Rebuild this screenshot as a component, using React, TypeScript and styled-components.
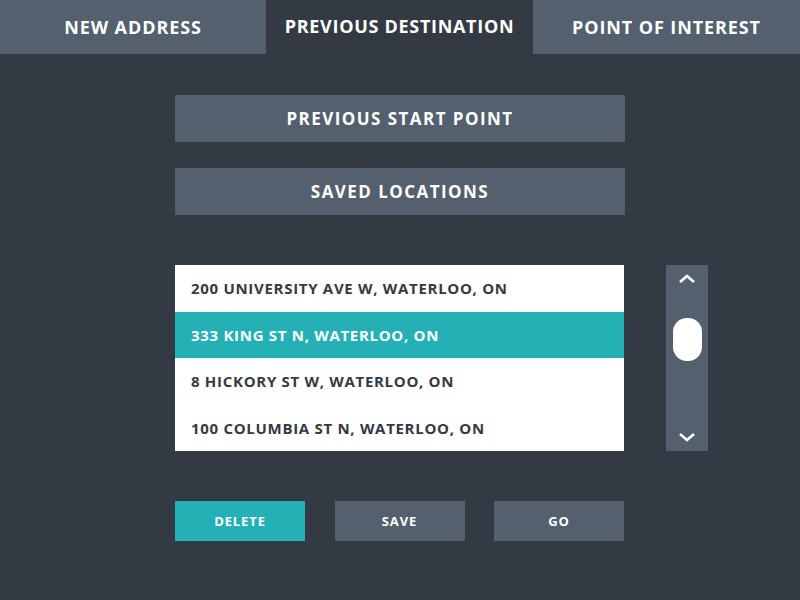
import React from 'react'
import styled, { createGlobalStyle } from 'styled-components'

const GlobalStyle = createGlobalStyle`
  html, body {
    margin: 0;
    padding: 0;
    background: #343a43;
  }
  * { box-sizing: border-box; }
`

const addresses = [
  '200 UNIVERSITY AVE W, WATERLOO, ON',
  '333 KING ST N, WATERLOO, ON',
  '8 HICKORY ST W, WATERLOO, ON',
  '100 COLUMBIA ST N, WATERLOO, ON',
]

const App = () => {
  return (
    <Screen>
      <GlobalStyle />
      <Tabs>
        <Tab>NEW ADDRESS</Tab>
        <Tab active>PREVIOUS DESTINATION</Tab>
        <Tab>POINT OF INTEREST</Tab>
      </Tabs>
      <Body>
        <Column>
          <WideButton>PREVIOUS START POINT</WideButton>
          <WideButton>SAVED LOCATIONS</WideButton>
        </Column>
        <ListArea>
          <List>
            {addresses.map((a, i) => (
              <Row key={a} selected={i === 1}>{a}</Row>
            ))}
          </List>
          <Scroll>
            <Chevron viewBox="0 0 20 12">
              <path d="M3 9 L10 3 L17 9" />
            </Chevron>
            <Track>
              <Thumb />
            </Track>
            <Chevron viewBox="0 0 20 12">
              <path d="M3 3 L10 9 L17 3" />
            </Chevron>
          </Scroll>
        </ListArea>
        <Actions>
          <SmallButton teal>DELETE</SmallButton>
          <SmallButton>SAVE</SmallButton>
          <SmallButton>GO</SmallButton>
        </Actions>
      </Body>
    </Screen>
  )
}

export default App

const Screen = styled.div`
  width: 800px;
  height: 600px;
  background: #343a43;
  font-family: 'Open Sans', 'Liberation Sans', sans-serif;
  color: #fff;
`

const Tabs = styled.div`
  display: grid;
  grid-template-columns: 266px 267px 267px;
  height: 54px;
`

const Tab = styled.div<{ active?: boolean }>`
  display: flex;
  align-items: center;
  justify-content: center;
  background: ${p => (p.active ? '#343a43' : '#55606e')};
  font-size: 18px;
  font-weight: 700;
  padding-bottom: ${p => (p.active ? '2px' : '0')};
  letter-spacing: ${p => (p.active ? '0.7px' : '0.9px')};
`

const Body = styled.div`
  padding: 41px 0 0 175px;
`

const Column = styled.div`
  display: flex;
  flex-direction: column;
  gap: 26px;
  width: 450px;
`

const WideButton = styled.div`
  height: 47px;
  background: #55606e;
  display: flex;
  align-items: center;
  justify-content: center;
  font-size: 17px;
  font-weight: 700;
  letter-spacing: 1.45px;
`

const ListArea = styled.div`
  display: flex;
  gap: 42px;
  margin-top: 50px;
  height: 186px;
`

const List = styled.div`
  width: 449px;
  background: #fff;
  display: grid;
  grid-template-rows: repeat(4, 1fr);
`

const Row = styled.div<{ selected?: boolean }>`
  display: flex;
  align-items: center;
  padding-left: 16px;
  background: ${p => (p.selected ? '#24b0b4' : '#fff')};
  color: ${p => (p.selected ? '#fff' : '#343a43')};
  font-size: 15px;
  font-weight: 700;
  letter-spacing: 0.7px;
`

const Scroll = styled.div`
  width: 42px;
  background: #55606e;
  display: flex;
  flex-direction: column;
  align-items: center;
  padding: 8px 0;
`

const Chevron = styled.svg`
  width: 20px;
  height: 12px;
  fill: none;
  stroke: #fff;
  stroke-width: 2.6;
`

const Track = styled.div`
  flex: 1;
  display: flex;
  flex-direction: column;
  align-items: center;
  padding-top: 33px;
`

const Thumb = styled.div`
  width: 29px;
  height: 43px;
  border-radius: 14px;
  background: #fff;
`

const Actions = styled.div`
  display: flex;
  justify-content: space-between;
  width: 449px;
  margin-top: 50px;
`

const SmallButton = styled.div<{ teal?: boolean }>`
  width: 130px;
  height: 40px;
  background: ${p => (p.teal ? '#24b0b4' : '#55606e')};
  display: flex;
  align-items: center;
  justify-content: center;
  font-size: 13px;
  font-weight: 700;
  letter-spacing: 0.9px;
`
